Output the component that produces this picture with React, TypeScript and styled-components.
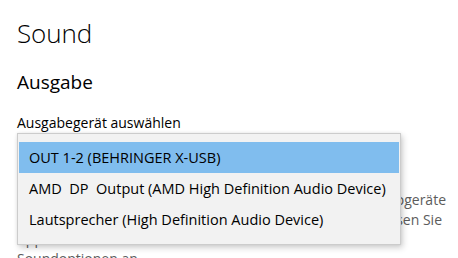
import React from "react";
import styled, { createGlobalStyle } from "styled-components";

const Global = createGlobalStyle`
  html, body { margin: 0; padding: 0; background: #ffffff; }
  body { font-family: "Open Sans", "Noto Sans", sans-serif; color: #000; overflow: hidden; }
`;

const Page = styled.div`
  position: relative;
  width: 458px;
  height: 258px;
  overflow: hidden;
  box-sizing: border-box;
  padding: 14px 0 0 17px;
  display: flex;
  flex-direction: column;
  & > * {
    flex: none;
  }
`;

const Title = styled.h1`
  margin: 0;
  font-size: 26px;
  font-weight: 300;
  line-height: 38px;
  letter-spacing: -0.1px;
`;

const Subtitle = styled.h2`
  margin: 17px 0 0 0;
  font-size: 19px;
  font-weight: 400;
  line-height: 26px;
`;

const Label = styled.div`
  margin-top: 18px;
  font-size: 14px;
  line-height: 20px;
`;

const ComboBox = styled.div`
  margin-top: 8px;
  width: 280px;
  height: 32px;
  border: 2px solid #999;
  box-sizing: border-box;
`;

const Description = styled.div`
  margin-top: 17px;
  font-size: 14px;
  line-height: 19.5px;
  color: #5c5c5c;
  white-space: nowrap;
  display: flex;
  flex-direction: column;
`;

const DescLine = styled.div<{ $end?: number }>`
  display: flex;
  justify-content: ${(p) => (p.$end ? "flex-end" : "flex-start")};
  width: ${(p) => (p.$end ? `${p.$end - 17}px` : "auto")};
  overflow: hidden;
`;

const Popup = styled.div`
  position: absolute;
  left: 17px;
  top: 133px;
  width: 384px;
  height: 112px;
  box-sizing: border-box;
  background: #f2f2f2;
  border: 1px solid #cccccc;
  padding: 8px 1px 0 1px;
  box-shadow: 2px 3px 6px rgba(0, 0, 0, 0.18), 0 0 3px rgba(0, 0, 0, 0.08);
  display: flex;
  flex-direction: column;
`;

const Item = styled.div<{ $selected?: boolean }>`
  height: 31px;
  flex: none;
  display: flex;
  align-items: center;
  padding-left: 10px;
  font-size: 14.5px;
  white-space: pre;
  background: ${(p) => (p.$selected ? "#80bdee" : "transparent")};
  color: #000;
`;

const items = [
  "OUT 1-2 (BEHRINGER X-USB)",
  "AMD  DP  Output (AMD High Definition Audio Device)",
  "Lautsprecher (High Definition Audio Device)",
];

export default function App() {
  return (
    <>
      <Global />
      <Page>
        <Title>Sound</Title>
        <Subtitle>Ausgabe</Subtitle>
        <Label>Ausgabegerät auswählen</Label>
        <ComboBox />
        <Description>
          <DescLine $end={446}>
            Bestimmte Apps sind möglicherweise für andere Audiogeräte
          </DescLine>
          <DescLine $end={442}>
            eingerichtet als das hier ausgewählte. Passen Sie
          </DescLine>
          <DescLine>App-Lautstärken und Geräte in den erweiterten</DescLine>
          <DescLine>Soundoptionen an.</DescLine>
        </Description>
        <Popup>
          {items.map((t, i) => (
            <Item key={i} $selected={i === 0}>
              {t}
            </Item>
          ))}
        </Popup>
      </Page>
    </>
  );
}
